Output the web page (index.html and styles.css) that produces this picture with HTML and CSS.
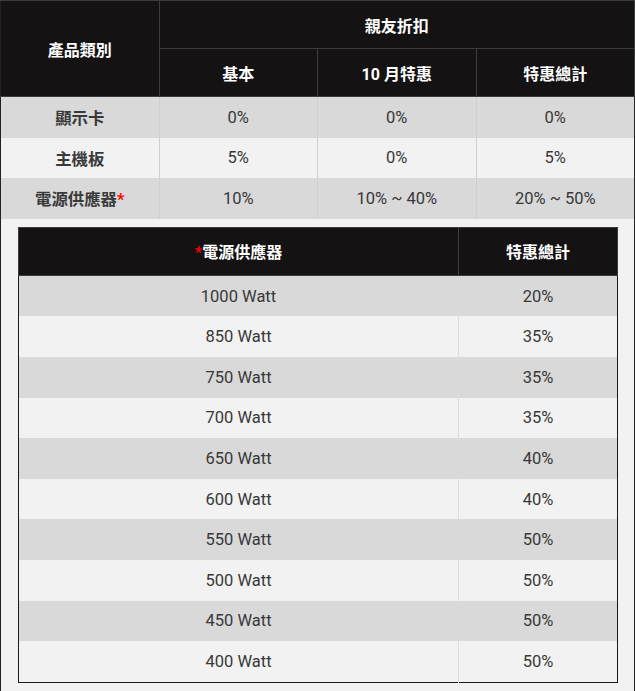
FILE: index.html
```html
<!DOCTYPE html>
<html lang="zh-Hant">
<head>
<meta charset="utf-8">
<title>親友折扣</title>
<link rel="stylesheet" href="styles.css">
</head>
<body>
<table class="main">
  <colgroup><col><col><col><col></colgroup>
  <thead>
    <tr class="hrow">
      <th rowspan="2">產品類別</th>
      <th colspan="3">親友折扣</th>
    </tr>
    <tr class="hrow">
      <th>基本</th>
      <th>10 月特惠</th>
      <th>特惠總計</th>
    </tr>
  </thead>
  <tbody>
    <tr class="dark">
      <td class="label">顯示卡</td><td>0%</td><td>0%</td><td>0%</td>
    </tr>
    <tr class="light">
      <td class="label">主機板</td><td>5%</td><td>0%</td><td>5%</td>
    </tr>
    <tr class="dark">
      <td class="label">電源供應器<span class="star">*</span></td><td>10%</td><td>10% ~ 40%</td><td>20% ~ 50%</td>
    </tr>
    <tr class="nest-row">
      <td colspan="4" class="nest-cell">
        <table class="sub">
          <thead>
            <tr class="subhead">
              <th class="wide"><span class="star">*</span>電源供應器</th>
              <th>特惠總計</th>
            </tr>
          </thead>
          <tbody>
            <tr class="dark"><td>1000 Watt</td><td>20%</td></tr>
            <tr class="light"><td>850 Watt</td><td>35%</td></tr>
            <tr class="dark"><td>750 Watt</td><td>35%</td></tr>
            <tr class="light"><td>700 Watt</td><td>35%</td></tr>
            <tr class="dark"><td>650 Watt</td><td>40%</td></tr>
            <tr class="light"><td>600 Watt</td><td>40%</td></tr>
            <tr class="dark"><td>550 Watt</td><td>50%</td></tr>
            <tr class="light"><td>500 Watt</td><td>50%</td></tr>
            <tr class="dark"><td>450 Watt</td><td>50%</td></tr>
            <tr class="light"><td>400 Watt</td><td>50%</td></tr>
          </tbody>
        </table>
      </td>
    </tr>
  </tbody>
</table>
</body>
</html>
```
FILE: styles.css
```css
html, body {
  margin: 0;
  padding: 0;
  background: #ffffff;
}

body {
  font-family: Roboto, "Noto Sans CJK TC", "Noto Sans", sans-serif;
  color: #383838;
  font-size: 16px;
}

table {
  border-collapse: collapse;
  border-spacing: 0;
}

.main {
  width: 635px;
  table-layout: fixed;
  border-left: 1px solid #222222;
  border-right: 1px solid #222222;
  border-top: 1px solid #3a3a3a;
  border-bottom: 1px solid #dddddd;
}

th {
  background: #141213;
  color: #ffffff;
  font-weight: 700;
  font-size: 16px;
  text-align: center;
  vertical-align: middle;
  padding: 0;
  border: 1px solid #3c3c3c;
}

.main > thead > tr > th:first-child {
  border-left-color: #222222;
}

.hrow th {
  height: 47px;
}

td {
  text-align: center;
  vertical-align: middle;
  padding: 0;
  height: 40.6px;
  font-size: 16.5px;
}

td + td {
  border-left: 1px solid #cfcfcf;
}

.dark td {
  background: #d9d9d9;
}

.light td {
  background: #f2f2f2;
}

td.label {
  font-weight: 700;
  font-size: 16.4px;
  color: #3a3a3a;
}

.star {
  color: #ff0000;
  font-weight: 700;
}

.nest-row td.nest-cell {
  background: #f2f2f2;
  height: auto;
  padding: 8px 16px 8px 17px;
}

.sub {
  width: 100%;
  table-layout: fixed;
  border: 1px solid #1a1a1a;
}

.sub th {
  height: 47px;
}

.sub th.wide {
  width: 439px;
}

.sub td + td {
  border-left: 1px solid #dcdcdc;
}
```
